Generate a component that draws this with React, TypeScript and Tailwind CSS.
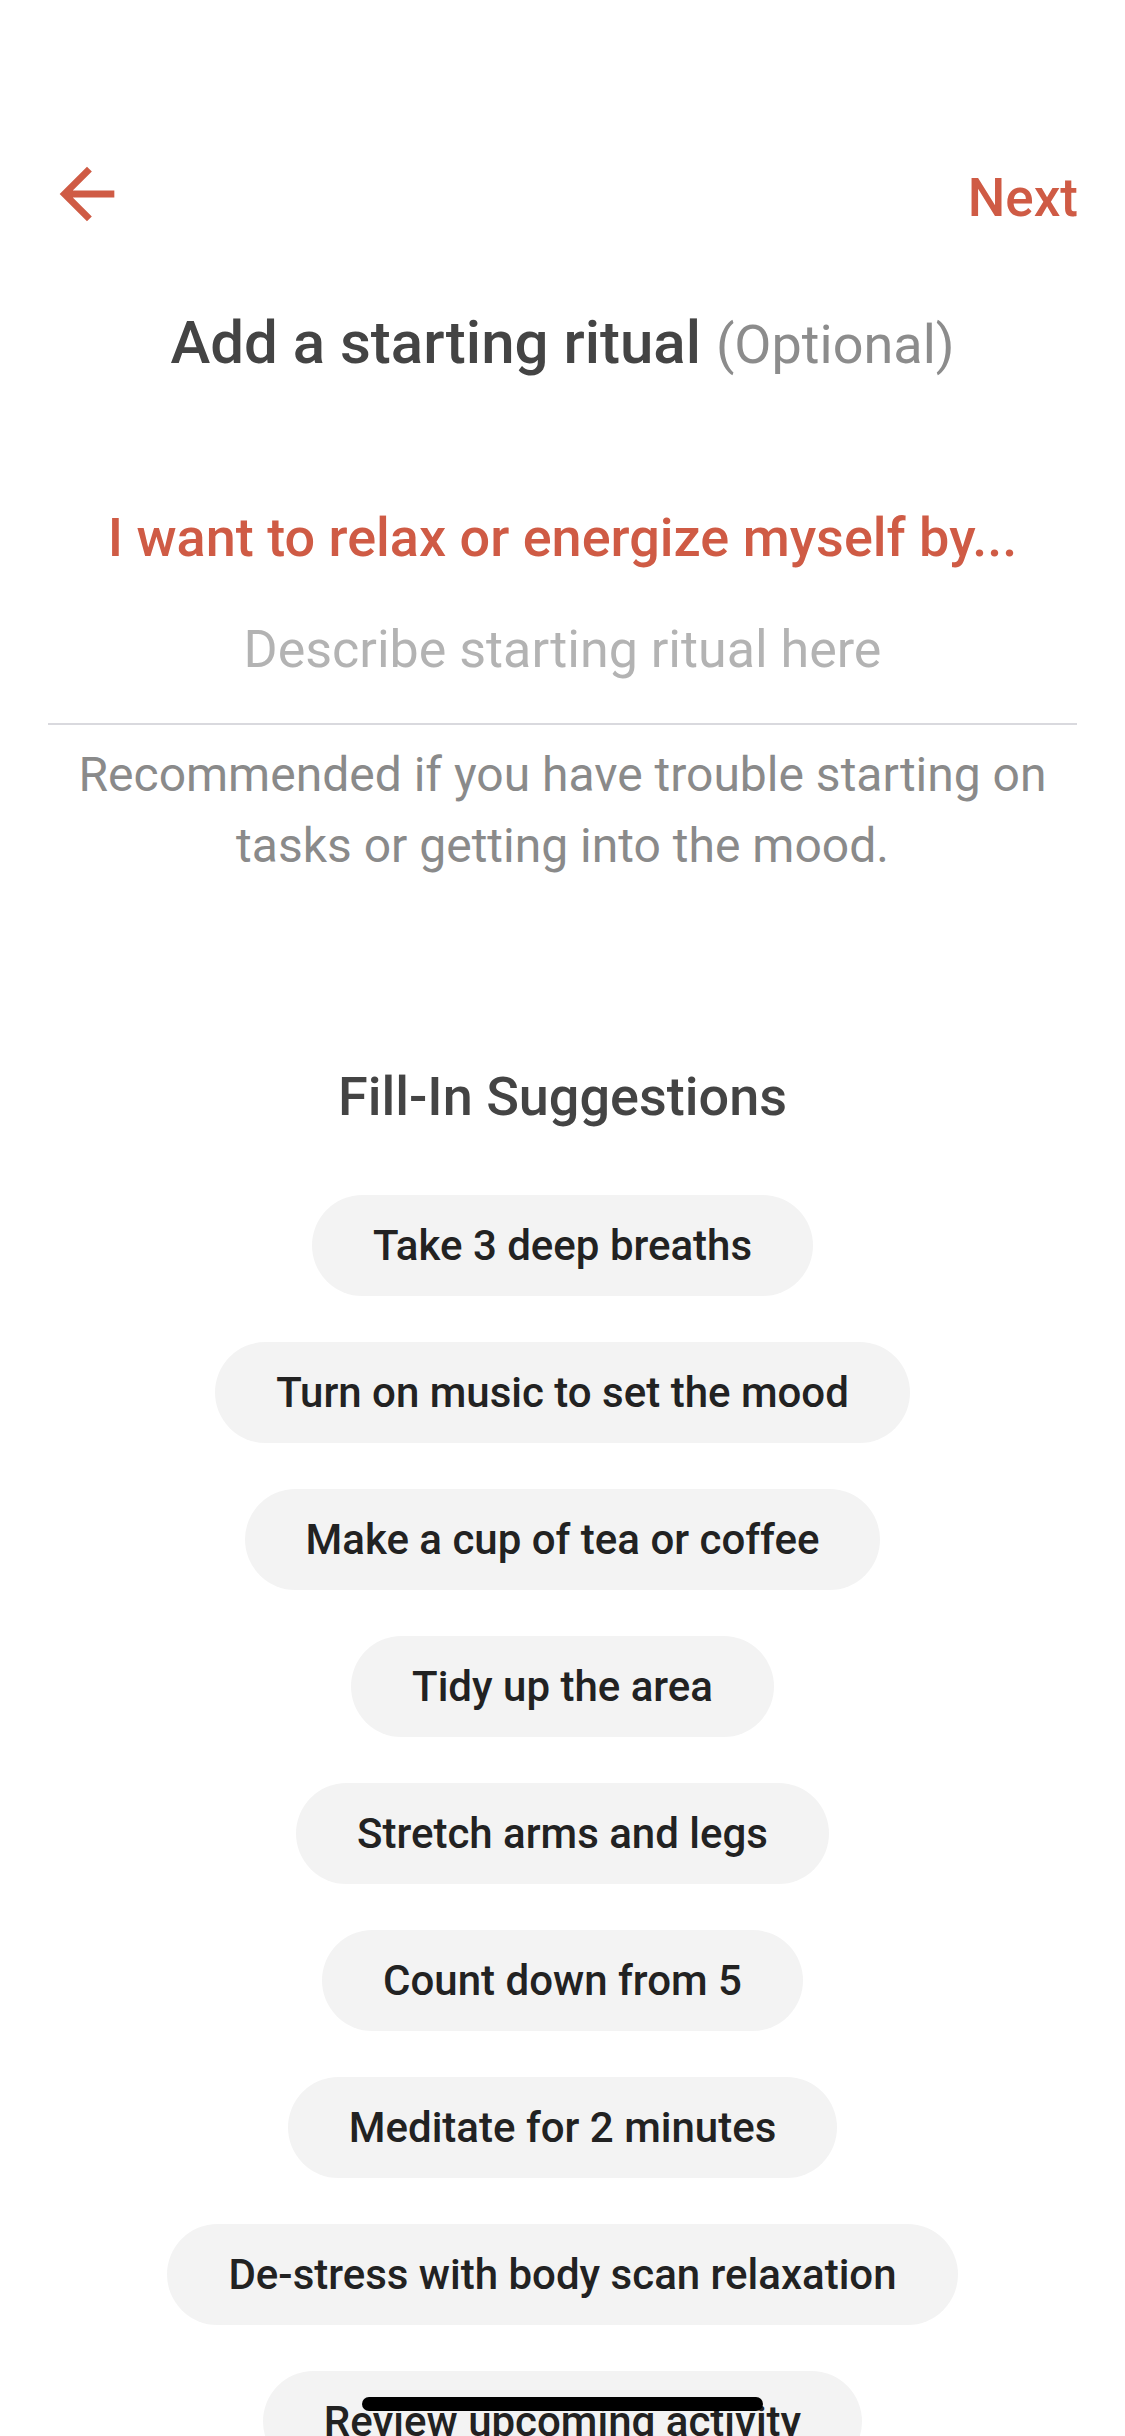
import React from "react";

const suggestions = [
  "Take 3 deep breaths",
  "Turn on music to set the mood",
  "Make a cup of tea or coffee",
  "Tidy up the area",
  "Stretch arms and legs",
  "Count down from 5",
  "Meditate for 2 minutes",
  "De-stress with body scan relaxation",
  "Review upcoming activity",
];

function BackArrow() {
  return (
    <svg width="82" height="82" viewBox="0 0 24 24" fill="#cf5b45">
      <path d="M20 11H7.83l5.59-5.59L12 4l-8 8 8 8 1.41-1.41L7.83 13H20v-2z" />
    </svg>
  );
}

export default function App() {
  return (
    <div
      className="relative h-[2436px] w-[1125px] overflow-hidden bg-white"
      style={{ fontFamily: "Roboto, 'Noto Sans', sans-serif" }}
    >
      {/* header */}
      <div className="flex items-start justify-between pl-[46px] pr-[47px] pt-[153px]">
        <BackArrow />
        <span className="mt-[19px] text-[53px] font-medium leading-none text-[#cf5b45]">
          Next
        </span>
      </div>

      {/* title */}
      <h1 className="mt-[73px] text-center text-[60px] font-medium leading-[70px] text-[#444444]">
        Add a starting ritual{" "}
        <span className="text-[54px] font-normal leading-none text-[#8c8c8c]">(Optional)</span>
      </h1>

      <p className="mt-[128px] text-center text-[54px] font-medium leading-[64px] text-[#cf5b45]">
        I want to relax or energize myself by...
      </p>

      <div className="mt-[50px] text-center text-[52px] leading-[60px] text-[#b3b3b3]">
        Describe starting ritual here
      </div>

      <div className="mx-[48px] mt-[43px] h-[2px] bg-[#d9d9de]" />

      <p className="mt-[14px] px-[40px] text-center text-[48px] leading-[71px] text-[#8a8a8a]">
        Recommended if you have trouble starting on tasks or getting into the mood.
      </p>

      <h2 className="mt-[184px] text-center text-[54px] font-medium leading-[64px] text-[#444444]">
        Fill-In Suggestions
      </h2>

      <div className="mt-[66px] flex flex-col items-center gap-[46px]">
        {suggestions.map((s) => (
          <button
            key={s}
            className="flex h-[101px] items-center rounded-full bg-[#f3f3f3] px-[61px] text-[42px] font-medium leading-none text-[#222222]"
          >
            {s}
          </button>
        ))}
      </div>

      {/* home indicator */}
      <div className="absolute bottom-[25px] left-[362px] h-[14px] w-[401px] rounded-full bg-black" />
    </div>
  );
}
